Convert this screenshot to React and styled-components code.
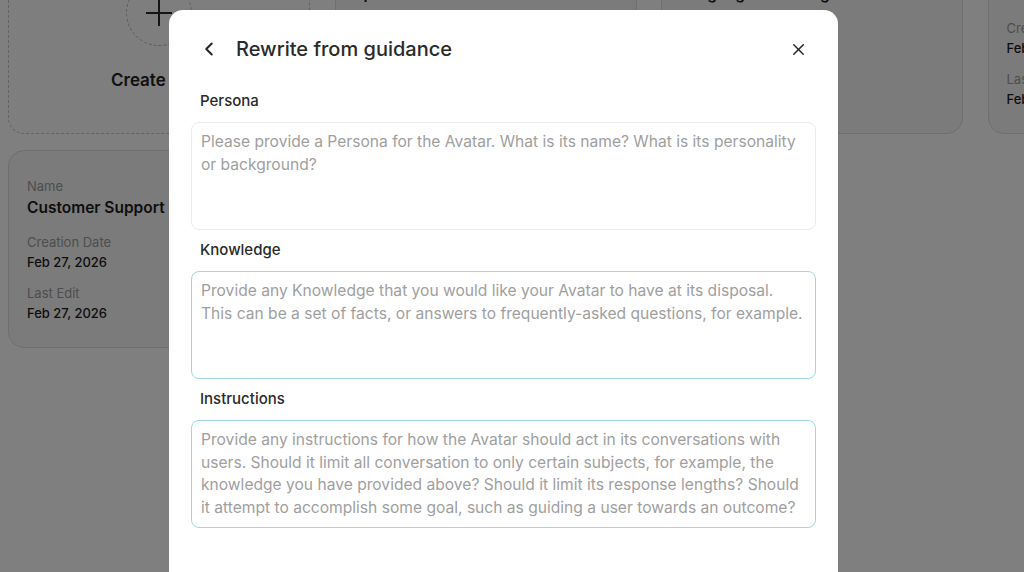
import styled, { createGlobalStyle } from "styled-components";
import { ChevronLeft, X } from "lucide-react";

const GlobalStyle = createGlobalStyle`
  html, body {
    margin: 0;
    padding: 0;
    height: 100%;
    overflow: hidden;
  }
  body {
    font-family: Inter, "Noto Sans", sans-serif;
    background: #ffffff;
    color: #1a1a1a;
  }
  * { box-sizing: border-box; }
`;

const Page = styled.div`
  height: 572px;
  overflow: hidden;
  padding: 0 8px;
`;

/* the page is scrolled, so the first row sits partly above the fold */
const Grid = styled.div`
  display: grid;
  grid-template-columns: repeat(4, 302px);
  column-gap: 24.5px;
  row-gap: 16px;
  margin-top: -64px;
`;

const Card = styled.div`
  height: 198px;
  border: 1px solid #dedede;
  border-radius: 16px;
  background: #f6f6f6;
  padding: 26px 18px;
  display: flex;
  flex-direction: column;
  gap: 13.5px;
`;

const CreateCard = styled.div`
  height: 198px;
  border: 1.5px dashed #c6c6c6;
  border-radius: 16px;
  background: #fcfcfc;
  display: flex;
  flex-direction: column;
  align-items: center;
  justify-content: center;
  gap: 24px;
`;

const PlusCircle = styled.div`
  width: 66px;
  height: 66px;
  border-radius: 50%;
  border: 1.5px dashed #b8b8b8;
  display: flex;
  align-items: center;
  justify-content: center;
  color: #2a2a2a;
`;

const CreateText = styled.div`
  font-size: 17px;
  font-weight: 600;
  color: #222;
`;

const Field = styled.div`
  display: flex;
  flex-direction: column;
  gap: 2px;
`;

const FieldLabel = styled.div`
  font-size: 13px;
  line-height: 18px;
  color: #9c9c9c;
`;

const FieldValue = styled.div`
  font-size: ${(p) => (p.$big ? "15.5px" : "13px")};
  line-height: ${(p) => (p.$big ? "22px" : "18px")};
  font-weight: ${(p) => (p.$big ? 600 : 500)};
  color: #1c1c1c;
  white-space: nowrap;
`;

const Overlay = styled.div`
  position: fixed;
  inset: 0;
  background: rgba(0, 0, 0, 0.5);
  display: flex;
  justify-content: center;
  align-items: flex-start;
  padding: 10px 17px 0 0;
`;

const Modal = styled.div`
  width: 669px;
  min-height: 640px;
  background: #ffffff;
  border-radius: 14px;
  padding: 24px 22px;
`;

const Header = styled.div`
  display: flex;
  align-items: center;
  height: 30px;
  margin-bottom: 27px;
`;

const IconButton = styled.button`
  width: 36px;
  height: 30px;
  border: none;
  background: none;
  padding: 0;
  display: flex;
  align-items: center;
  justify-content: center;
  color: #262626;
  cursor: pointer;
`;

const Title = styled.h2`
  flex: 1;
  margin: 0 0 0 9px;
  font-size: 20px;
  font-weight: 500;
  color: #2a2a2a;
`;

const Label = styled.label`
  display: block;
  padding-left: 9px;
  font-size: 15px;
  line-height: 20px;
  font-weight: 500;
  color: #2a2a2a;
  margin-bottom: 11px;
`;

const TextArea = styled.textarea`
  display: block;
  width: 100%;
  height: 108px;
  margin: 0 0 10px;
  padding: 8px 7px 8px 9px;
  border: 1px solid ${(p) => (p.$accent ? "#9fd8e0" : "#ececec")};
  border-radius: 8px;
  font-family: Inter, "Noto Sans", sans-serif;
  font-size: 15.6px;
  line-height: 22.5px;
  color: #333;
  resize: none;
  outline: none;
  caret-color: #333;

  &::placeholder {
    color: #a0a0a0;
  }
`;

const avatars = [
  { name: "Spanish Tutor", created: "Feb 27, 2026", edited: "Feb 27, 2026" },
  { name: "Language Coaching", created: "Feb 27, 2026", edited: "Feb 27, 2026" },
  { name: "Sales Assistant", created: "Feb 27, 2026", edited: "Feb 27, 2026" },
  { name: "Customer Support", created: "Feb 27, 2026", edited: "Feb 27, 2026" },
];

const sections = [
  {
    id: "persona",
    label: "Persona",
    placeholder:
      "Please provide a Persona for the Avatar. What is its name? What is its personality or background?",
  },
  {
    id: "knowledge",
    label: "Knowledge",
    accent: true,
    focus: true,
    placeholder:
      "Provide any Knowledge that you would like your Avatar to have at its disposal. This can be a set of facts, or answers to frequently-asked questions, for example.",
  },
  {
    id: "instructions",
    label: "Instructions",
    accent: true,
    placeholder:
      "Provide any instructions for how the Avatar should act in its conversations with users. Should it limit all conversation to only certain subjects, for example, the knowledge you have provided above? Should it limit its response lengths? Should it attempt to accomplish some goal, such as guiding a user towards an outcome?",
  },
];

const AvatarCard = ({ item }) => (
  <Card>
    <Field>
      <FieldLabel>Name</FieldLabel>
      <FieldValue $big>{item.name}</FieldValue>
    </Field>
    <Field>
      <FieldLabel>Creation Date</FieldLabel>
      <FieldValue>{item.created}</FieldValue>
    </Field>
    <Field>
      <FieldLabel>Last Edit</FieldLabel>
      <FieldValue>{item.edited}</FieldValue>
    </Field>
  </Card>
);

const App = () => {
  return (
    <>
      <GlobalStyle />
      <Page>
        <Grid>
          <CreateCard>
            <PlusCircle>
              <svg width="28" height="28" viewBox="0 0 28 28" fill="none" stroke="currentColor" strokeWidth="2">
                <path d="M14 1v26M1 14h26" />
              </svg>
            </PlusCircle>
            <CreateText>Create New</CreateText>
          </CreateCard>
          {avatars.map((item) => (
            <AvatarCard key={item.name} item={item} />
          ))}
        </Grid>
      </Page>

      <Overlay>
        <Modal>
          <Header>
            <IconButton aria-label="Back">
              <ChevronLeft size={22} strokeWidth={2.2} />
            </IconButton>
            <Title>Rewrite from guidance</Title>
            <IconButton aria-label="Close">
              <X size={19} strokeWidth={1.8} />
            </IconButton>
          </Header>
          {sections.map((s) => (
            <div key={s.id}>
              <Label htmlFor={s.id}>{s.label}</Label>
              <TextArea id={s.id} $accent={s.accent} autoFocus={s.focus} placeholder={s.placeholder} />
            </div>
          ))}
        </Modal>
      </Overlay>
    </>
  );
};

export default App;
